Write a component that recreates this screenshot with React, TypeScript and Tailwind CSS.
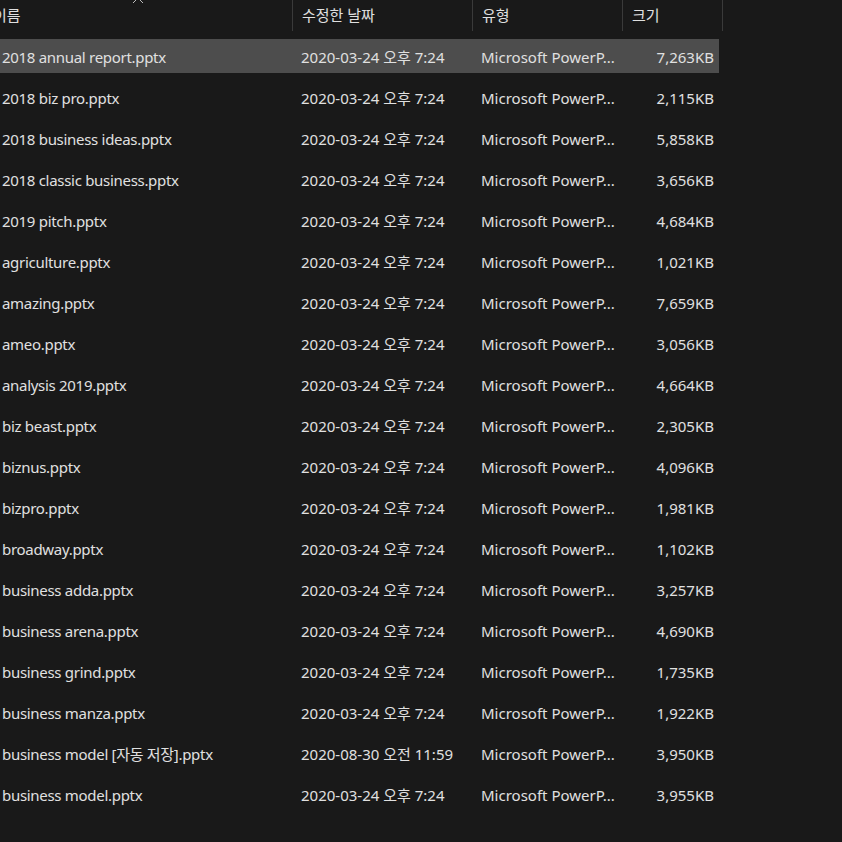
const FILES = [
  ["2018 annual report.pptx", "2020-03-24 오후 7:24", "7,263KB"],
  ["2018 biz pro.pptx", "2020-03-24 오후 7:24", "2,115KB"],
  ["2018 business ideas.pptx", "2020-03-24 오후 7:24", "5,858KB"],
  ["2018 classic business.pptx", "2020-03-24 오후 7:24", "3,656KB"],
  ["2019 pitch.pptx", "2020-03-24 오후 7:24", "4,684KB"],
  ["agriculture.pptx", "2020-03-24 오후 7:24", "1,021KB"],
  ["amazing.pptx", "2020-03-24 오후 7:24", "7,659KB"],
  ["ameo.pptx", "2020-03-24 오후 7:24", "3,056KB"],
  ["analysis 2019.pptx", "2020-03-24 오후 7:24", "4,664KB"],
  ["biz beast.pptx", "2020-03-24 오후 7:24", "2,305KB"],
  ["biznus.pptx", "2020-03-24 오후 7:24", "4,096KB"],
  ["bizpro.pptx", "2020-03-24 오후 7:24", "1,981KB"],
  ["broadway.pptx", "2020-03-24 오후 7:24", "1,102KB"],
  ["business adda.pptx", "2020-03-24 오후 7:24", "3,257KB"],
  ["business arena.pptx", "2020-03-24 오후 7:24", "4,690KB"],
  ["business grind.pptx", "2020-03-24 오후 7:24", "1,735KB"],
  ["business manza.pptx", "2020-03-24 오후 7:24", "1,922KB"],
  ["business model [자동 저장].pptx", "2020-08-30 오전 11:59", "3,950KB"],
  ["business model.pptx", "2020-03-24 오후 7:24", "3,955KB"],
];

function HeaderCell({ label, width }: { label: string; width: string }) {
  return (
    <div className={`flex h-[31px] items-center border-r border-[#3a3a3a] ${width}`}>
      <span className="pl-[9px]">{label}</span>
    </div>
  );
}

export default function App() {
  return (
    <div
      className="h-[842px] w-[842px] overflow-hidden bg-[#191919] text-[15px] text-[#e0e0e0]"
      style={{ fontFamily: '"Segoe UI", "Noto Sans", "Noto Sans CJK KR", sans-serif' }}
    >
      {/* column headers, first label scrolled partly out of view */}
      <div className="relative flex">
        <div className="flex h-[31px] w-[293px] items-center border-r border-[#3a3a3a]">
          <span className="-ml-[7px]">이름</span>
        </div>
        <HeaderCell label="수정한 날짜" width="w-[180px]" />
        <HeaderCell label="유형" width="w-[150px]" />
        <HeaderCell label="크기" width="w-[100px]" />
        <svg className="absolute left-[132px] top-[-4px]" width="12" height="8" viewBox="0 0 12 8">
          <path d="M1 7 L6 2 L11 7" fill="none" stroke="#bdbdbd" strokeWidth="1" />
        </svg>
      </div>

      <div className="mt-[4px] flex flex-col">
        {FILES.map(([name, date, size], i) => (
          <div key={name} className="flex h-[41px] items-center">
            <div
              className={`flex h-[34px] w-[719px] items-center pt-[4px] ${i === 0 ? "bg-[#4d4d4d]" : ""}`}
            >
              <div className="w-[293px] truncate pl-[2px] tracking-[-0.3px]">{name}</div>
              <div className="w-[180px] pl-[8px]">{date}</div>
              <div className="w-[150px] pl-[8px]">Microsoft PowerP...</div>
              <div className="w-[91px] text-right">{size}</div>
            </div>
          </div>
        ))}
      </div>
    </div>
  );
}
